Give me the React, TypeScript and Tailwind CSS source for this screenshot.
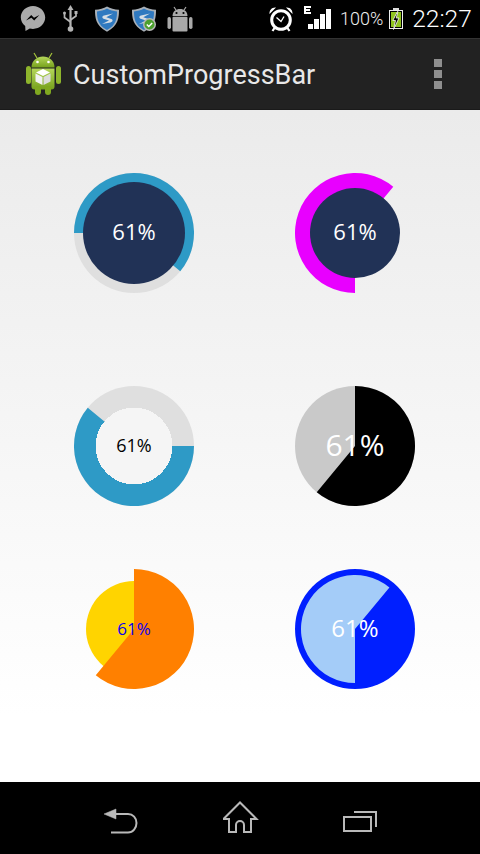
import React from "react";

const pt = (cx: number, cy: number, r: number, deg: number) => {
  const a = (deg * Math.PI) / 180;
  return [cx + r * Math.cos(a), cy + r * Math.sin(a)];
};
const sector = (r: number, start: number, sweep = 219.6) => {
  const [x1, y1] = pt(60, 60, r, start);
  const [x2, y2] = pt(60, 60, r, start + sweep);
  return `M60 60L${x1} ${y1}A${r} ${r} 0 ${sweep > 180 ? 1 : 0} 1 ${x2} ${y2}Z`;
};

function Gauge({ children, label, text }: { children: React.ReactNode; label: string; text: string }) {
  return (
    <div className="relative h-[120px] w-[120px]">
      <svg width="120" height="120" viewBox="0 0 120 120" className="block">
        {children}
      </svg>
      <div className={`absolute inset-0 flex items-center justify-center font-['Open_Sans',sans-serif] ${text}`}>
        {label}
      </div>
    </div>
  );
}

function Messenger() {
  return (
    <svg width="26" height="28" viewBox="0 0 26 28" className="block">
      <path d="M13 1C6.2 1 .8 6 .8 12.3c0 3.5 1.7 6.6 4.4 8.7l.3 5 4.3-2.5c1 .3 2.1.4 3.2.4 6.8 0 12.2-5 12.2-11.6C25 6 19.800 1 13 1z" fill="#ababab" />
      <path d="M6 15.500l5.200-5.400 2.800 2.700 5.400-2.700-5.200 5.500-2.800-2.800z" fill="#000" />
    </svg>
  );
}
function Usb() {
  return (
    <svg width="15" height="28" viewBox="0 0 15 28" className="block">
      <g fill="none" stroke="#b5b5b5" strokeWidth="1.700">
        <path d="M7.500 4v19" strokeWidth="2.200" />
        <path d="M1.500 9v3.500l6 4.500M13 9v2l-5.500 4" />
      </g>
      <path d="M7.500 0l3 5h-6z" fill="#b5b5b5" />
      <circle cx="7.500" cy="24" r="2.800" fill="#b5b5b5" />
      <circle cx="1.500" cy="8" r="1.500" fill="#b5b5b5" />
      <rect x="11.500" y="6" width="3" height="3" fill="#b5b5b5" />
    </svg>
  );
}
function Shield({ check }: { check?: boolean }) {
  return (
    <svg width="26" height="26" viewBox="0 0 26 26" className="block">
      <path d="M13 .5C9.800 2.500 5.500 3.700 1 3.800c0 7 .3 16 12 22 11.700-6 12-15 12-22C20.500 3.700 16.200 2.500 13 .5z" fill="#a8b0b8" />
      <path d="M13 2.500C10 4.200 6.500 5.200 3 5.400c0 6 .5 13.600 10 18.500 9.500-4.900 10-12.500 10-18.500-3.500-.2-7-1.200-10-2.900z" fill="#2f79c0" />
      <path d="M19 7.500l-9 2c-2 .5-2.200 2.500-.5 3.200l5.500 1.800-7 3.500 8.500-1.500c2.500-.6 2.700-2.600.8-3.400l-5-1.800z" fill="#d5dde5" />
      {check && (
        <>
          <circle cx="18.500" cy="18.500" r="6.500" fill="#b8b8b8" />
          <circle cx="18.500" cy="18.500" r="5" fill="#4ca02e" />
          <path d="M15.800 18.500l2 2 3.400-3.600" fill="none" stroke="#fff" strokeWidth="1.500" />
        </>
      )}
    </svg>
  );
}
function AndroidGray() {
  return (
    <svg width="26" height="26" viewBox="0 0 26 26" className="block">
      <path d="M7 1l2 3M19 1l-2 3" stroke="#a9a9a9" strokeWidth="1.200" />
      <path d="M5.500 10C5.500 5.500 9 3 13 3s7.500 2.500 7.500 7z" fill="#a9a9a9" />
      <circle cx="9.500" cy="7" r="1.100" fill="#000" />
      <circle cx="16.500" cy="7" r="1.100" fill="#000" />
      <rect x="5.500" y="10.800" width="15" height="14.700" rx="1" fill="#a9a9a9" />
      <rect x="0.500" y="11" width="3.500" height="12" rx="1.700" fill="#a9a9a9" />
      <rect x="22" y="11" width="3.500" height="12" rx="1.700" fill="#a9a9a9" />
    </svg>
  );
}
function Alarm() {
  return (
    <svg width="24" height="26" viewBox="0 0 24 26" className="block">
      <circle cx="12" cy="14" r="9.300" fill="none" stroke="#fff" strokeWidth="3" />
      <path d="M.5 8C.2 4 3 1 7 1.500zM23.500 8C23.800 4 21 1 17 1.500z" fill="#fff" />
      <path d="M7.500 11.500l4.500 4 3-5" fill="none" stroke="#fff" strokeWidth="1.300" />
      <path d="M5.500 22l-2 3M18.500 22l2 3" stroke="#fff" strokeWidth="2.200" />
    </svg>
  );
}
function Signal() {
  return (
    <svg width="28" height="26" viewBox="0 0 28 26" className="block" shapeRendering="crispEdges">
      <path d="M0 0h7v2H2v1h4v2H2v1h5v2H0z" fill="#fff" />
      <rect x="4" y="18" width="5" height="5" fill="#fff" />
      <rect x="10" y="13" width="5" height="10" fill="#fff" />
      <rect x="16" y="8" width="5" height="15" fill="#fff" />
      <rect x="22" y="3" width="5" height="20" fill="#fff" />
    </svg>
  );
}
function Battery() {
  return (
    <svg width="14" height="24" viewBox="0 0 14 24" className="block">
      <rect x="4" y="1" width="6" height="2" fill="#ddd" />
      <rect x="0.500" y="3.500" width="13" height="18" fill="#000" stroke="#eee" />
      <rect x="2" y="5" width="10" height="15" fill="#8fc31f" />
      <path d="M8.500 4.500L3.800 13.500h2.700l-2 9 5.500-11.500H7.200l1.800-6.500z" fill="#000" stroke="#fff" strokeWidth="0.800" />
    </svg>
  );
}
function AppIcon() {
  return (
    <svg width="38" height="44" viewBox="0 0 38 44" className="block">
      <defs>
        <linearGradient id="g" x1="0" y1="0" x2="0" y2="1">
          <stop offset="0" stopColor="#b5d75a" />
          <stop offset="1" stopColor="#76a11c" />
        </linearGradient>
      </defs>
      <path d="M10 1l3 5M28 1l-3 5" stroke="#a5c43a" strokeWidth="1.200" />
      <path d="M7.500 15.500C7.500 8.500 13 4.500 19 4.500s11.500 4 11.500 11z" fill="url(#g)" />
      <circle cx="13.500" cy="10" r="1.300" fill="#fff" />
      <circle cx="24.500" cy="10" r="1.300" fill="#fff" />
      <path d="M7.500 16.500h23v18a3 3 0 0 1-3 3h-17a3 3 0 0 1-3-3z" fill="url(#g)" />
      <rect x="2" y="14" width="5" height="18" rx="2.500" fill="#8eb52c" />
      <rect x="32" y="14" width="5" height="18" rx="2.500" fill="#8eb52c" />
      <rect x="11" y="34" width="6" height="9" rx="3" fill="#80a820" />
      <rect x="21" y="34" width="6" height="9" rx="3" fill="#80a820" />
      <path d="M19 17l7 3.500-7 3.500-7-3.500z" fill="#fff" />
      <path d="M11.500 21.500l7 3.500v8l-7-3.500z" fill="#f2f2f2" />
      <path d="M26.500 21.500l-7 3.500v8l7-3.500z" fill="#dcdcdc" />
    </svg>
  );
}

export default function App() {
  return (
    <div className="flex h-[854px] w-[480px] flex-col overflow-hidden bg-black font-['Roboto',sans-serif]">
      <div className="flex h-[38px] shrink-0 items-center bg-black">
        <div className="ml-[20px]"><Messenger /></div>
        <div className="ml-[17px]"><Usb /></div>
        <div className="ml-[16px]"><Shield /></div>
        <div className="ml-[11px]"><Shield check /></div>
        <div className="ml-[10px]"><AndroidGray /></div>
        <div className="ml-[76px]"><Alarm /></div>
        <div className="ml-[11px]"><Signal /></div>
        <span className="ml-[8px] text-[18px] font-light leading-none text-[#f0f0f0]">100%</span>
        <div className="ml-[6px]"><Battery /></div>
        <span className="ml-[9px] text-[24.5px] font-light leading-none text-white">22:27</span>
      </div>
      <div className="flex h-[72px] shrink-0 items-center border-t border-b border-t-[#333] border-b-[#1a1a1a] bg-[#222222]">
        <div className="ml-[24px]"><AppIcon /></div>
        <span className="ml-[11px] mt-[2px] text-[27px] leading-none text-[#e8e8e8] font-normal">CustomProgressBar</span>
        <div className="ml-auto mr-[38px] flex flex-col gap-[3px]">
          <div className="h-[8px] w-[8px] bg-[#8f8f8f]" />
          <div className="h-[8px] w-[8px] bg-[#8f8f8f]" />
          <div className="h-[8px] w-[8px] bg-[#8f8f8f]" />
        </div>
      </div>
      <main className="h-[672px] shrink-0 bg-linear-to-b from-[#ebebeb] to-white to-90% pl-[74px] pt-[63px]">
        <div className="flex gap-[101px]">
          <Gauge label="61%" text="pb-[3px] text-[22px] text-white">
            <circle cx="60" cy="60" r="60" fill="#dfdfdf" />
            <path d={sector(60, 180)} fill="#2e9ac6" />
            <circle cx="60" cy="60" r="51" fill="#213256" />
          </Gauge>
          <Gauge label="61%" text="pb-[3px] text-[22px] text-white">
            <path d={sector(60, 90)} fill="#e800ff" />
            <circle cx="60" cy="60" r="45" fill="#213256" />
          </Gauge>
        </div>
        <div className="mt-[93px] flex gap-[101px]">
          <Gauge label="61%" text="pb-[2px] text-[18px] text-black">
            <circle cx="60" cy="60" r="60" fill="#dfdfdf" />
            <path d={sector(60, 0)} fill="#2e9ac6" />
            <circle cx="60" cy="60" r="38.500" fill="#f5f5f5" shapeRendering="crispEdges" />
          </Gauge>
          <Gauge label="61%" text="pb-[4px] text-[30px] text-white">
            <circle cx="60" cy="60" r="60" fill="#c9c9c9" />
            <path d={sector(60, -90)} fill="#000" />
          </Gauge>
        </div>
        <div className="mt-[63px] flex gap-[101px]">
          <Gauge label="61%" text="text-[17px] text-[#0a00ee]">
            <circle cx="60" cy="60" r="48" fill="#ffd400" />
            <path d={sector(60, -90)} fill="#ff8000" />
          </Gauge>
          <Gauge label="61%" text="pb-[2px] text-[24px] text-white">
            <circle cx="60" cy="60" r="60" fill="#001fff" />
            <path d={sector(54, 90)} fill="#a4ccf8" />
          </Gauge>
        </div>
      </main>
      <nav className="flex h-[72px] shrink-0 items-start bg-black pt-[19px]">
        <svg width="36" height="34" viewBox="0 0 36 34" className="ml-[103px] block" fill="none" stroke="#b9b9b9" strokeWidth="2">
          <path d="M1 13l12-5v10z" fill="#b9b9b9" strokeWidth="0.500" />
          <path d="M13 13h12c5 0 8.500 4 8.500 9s-3.500 9.500-8.500 9.500H8" />
        </svg>
        <svg width="36" height="34" viewBox="0 0 36 34" className="ml-[84px] block" fill="none" stroke="#b9b9b9" strokeWidth="2">
          <path d="M.5 18L17 1.500 33.500 18H28V31H21V24a4 4 0 0 0-8 0V31H6V18z" />
        </svg>
        <svg width="36" height="34" viewBox="0 0 36 34" className="ml-[84px] block" fill="none" stroke="#b9b9b9" strokeWidth="2">
          <rect x="1" y="16" width="27" height="14" />
          <path d="M11 11H33V26" />
        </svg>
      </nav>
    </div>
  );
}
